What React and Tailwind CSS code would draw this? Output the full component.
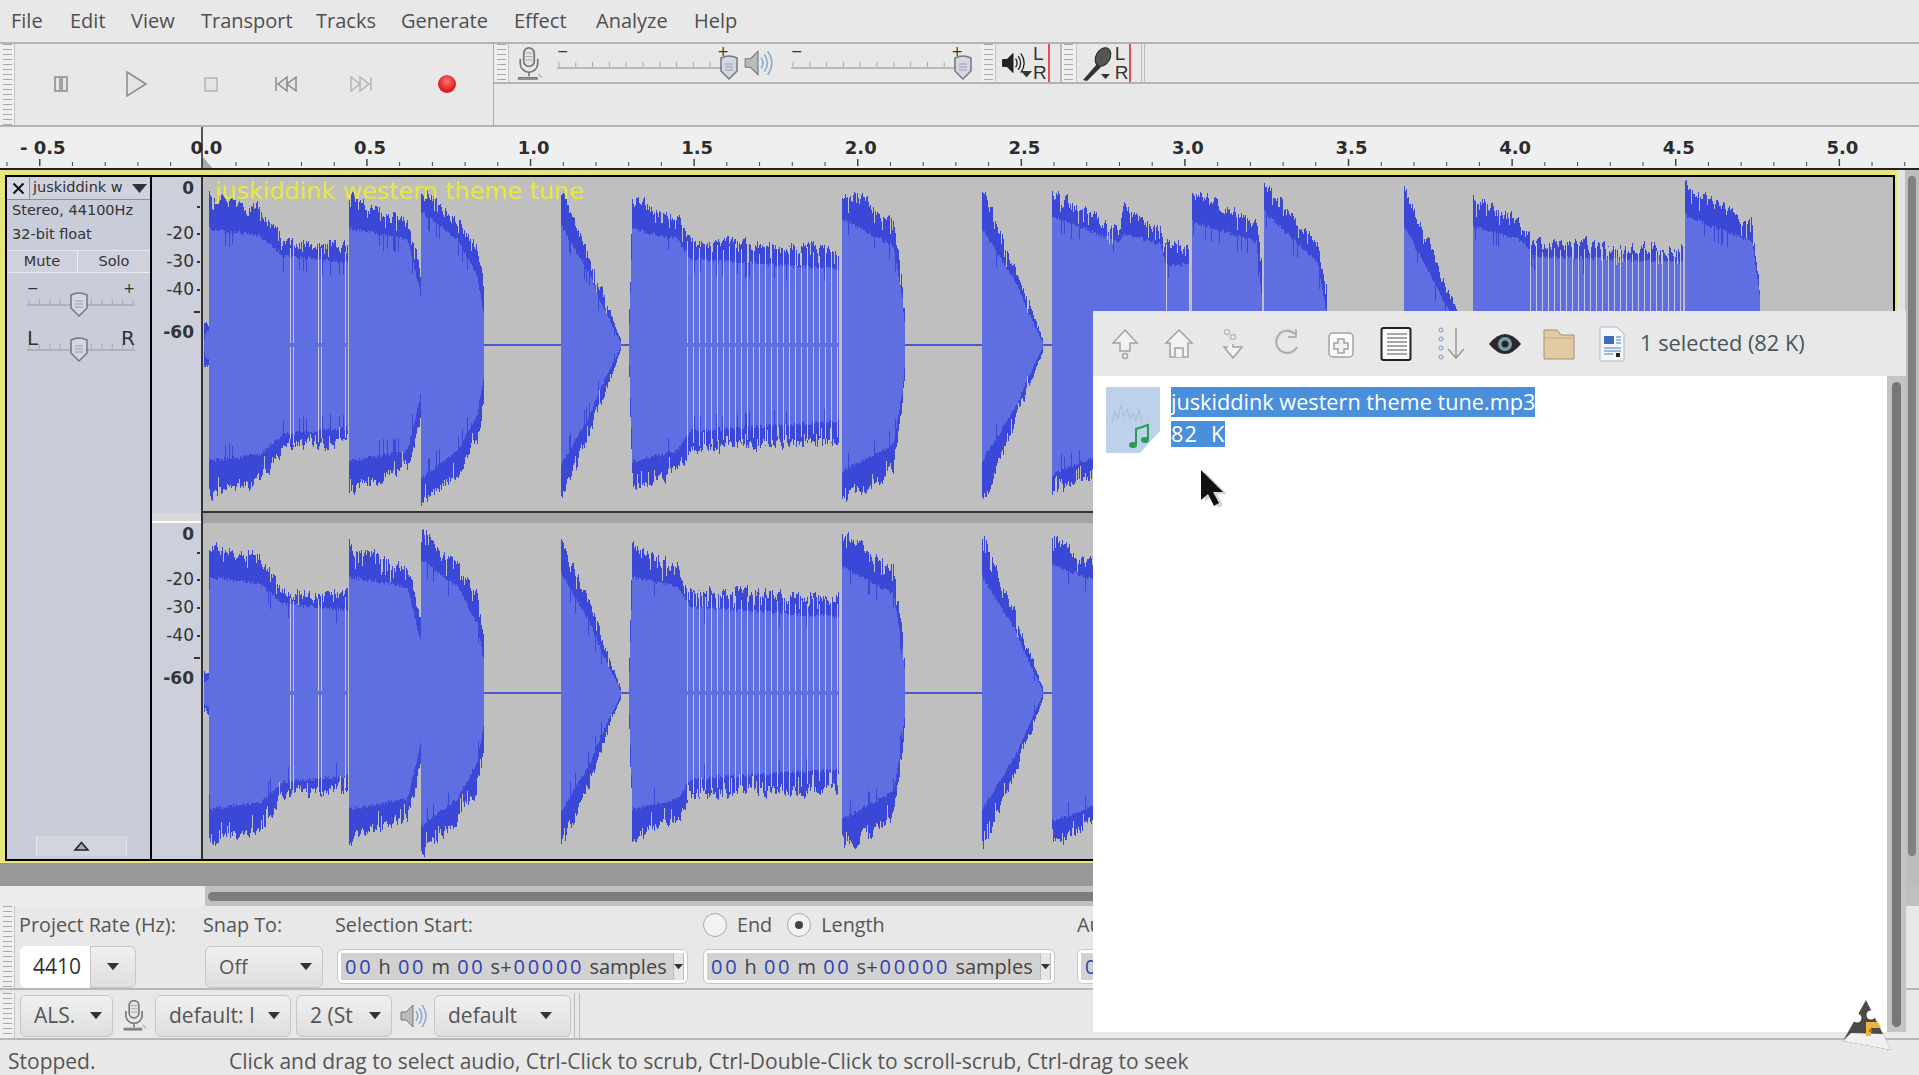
import { useMemo } from 'react';

const MENU = [
  ['File', 'w-[59px]'],
  ['Edit', 'w-[61px]'],
  ['View', 'w-[70px]'],
  ['Transport', 'w-[115px]'],
  ['Tracks', 'w-[85px]'],
  ['Generate', 'w-[113px]'],
  ['Effect', 'w-[82px]'],
  ['Analyze', 'w-[98px]'],
  ['Help', 'w-[60px]'],
];

const RULER = ['- 0.5', '0.0', '0.5', '1.0', '1.5', '2.0', '2.5', '3.0', '3.5', '4.0', '4.5', '5.0'];

// x, peak amplitude, rms amplitude (px from the centre line)
const BLOCKS = [
  { keys: [[204, 20, 14], [208, 24, 18], [209, 155, 125], [260, 142, 118], [283, 107, 98], [347, 103, 92]], gaps: [290, 293, 318, 321, 345] },
  { keys: [[349, 153, 125], [407, 128, 115], [419, 85, 65], [420, 80, 60]] },
  { keys: [[421, 165, 142], [457, 132, 115], [477, 102, 78], [483, 65, 42]] },
  { keys: [[561, 160, 128], [590, 92, 78], [620, 8, 4]] },
  { keys: [[629, 40, 28], [632, 152, 125], [677, 132, 115], [690, 108, 95], [838, 102, 85]], comb: [687, 838] },
  { keys: [[842, 162, 135], [893, 132, 108], [902, 68, 55], [904, 42, 30]] },
  { keys: [[982, 165, 125], [1017, 78, 68], [1042, 8, 4]] },
  { keys: [[1052, 158, 138], [1118, 120, 112], [1124, 145, 120], [1160, 118, 110], [1166, 105, 88], [1189, 103, 90]], gaps: [1166, 1189] },
  { keys: [[1192, 160, 132], [1256, 128, 112], [1261, 92, 60]] },
  { keys: [[1264, 167, 142], [1317, 105, 92], [1326, 65, 42]] },
  { keys: [[1404, 163, 128], [1455, 42, 30], [1470, 8, 4]] },
  { keys: [[1473, 155, 128], [1522, 125, 113], [1533, 107, 98], [1682, 103, 92]], comb: [1530, 1682] },
  { keys: [[1685, 165, 138], [1752, 125, 112], [1759, 68, 60]] },
];

const FLATS = [[483, 561], [620, 629], [904, 982], [1042, 1052], [1326, 1404], [1470, 1473]];

function rng(seed) {
  let s = seed;
  return () => {
    s = (s * 16807) % 2147483647;
    return s / 2147483647;
  };
}

function interp(keys, x) {
  for (let i = 0; i < keys.length - 1; i++) {
    const [x0, p0, r0] = keys[i];
    const [x1, p1, r1] = keys[i + 1];
    if (x >= x0 && x <= x1) {
      const t = (x - x0) / (x1 - x0 || 1);
      return [p0 + (p1 - p0) * t, r0 + (r1 - r0) * t];
    }
  }
  return [0, 0];
}

function buildWave(seed, center, offset) {
  const r = rng(seed);
  let dark = '';
  let light = '';
  let gap = '';
  let walkA = 0;
  let walkB = 0;
  BLOCKS.forEach((b) => {
    const start = b.keys[0][0];
    const end = b.keys[b.keys.length - 1][0];
    for (let x = start; x <= end; x++) {
      const [p, q] = interp(b.keys, x);
      const px = x - offset + 0.5;
      walkA = walkA * 0.55 + r() * 11;
      walkB = walkB * 0.55 + r() * 11;
      const scale = Math.min(1, p / 60);
      const top = p + 6 * scale - walkA * scale - (r() < 0.1 ? 12 * scale : 0);
      const bot = p + 6 * scale - walkB * scale - (r() < 0.1 ? 12 * scale : 0);
      const dip = r() < 0.06 ? 14 * scale : 0;
      const rt = Math.min(q - (7 + r() * 4) * scale - dip, top);
      const rb = Math.min(q - (7 + r() * 4) * scale - dip, bot);
      dark += `M${px} ${(center - top).toFixed(0)}V${(center + bot).toFixed(0)}`;
      light += `M${px} ${(center - rt).toFixed(0)}V${(center + rb).toFixed(0)}`;
      const inComb = b.comb && x >= b.comb[0] && x <= b.comb[1] && (x - b.comb[0]) % 6 === 0;
      if (inComb || (b.gaps && b.gaps.includes(x))) {
        const g = p - 8 - r() * 8;
        gap += `M${px} ${(center - g - r() * 6).toFixed(0)}V${center - 2}M${px} ${center + 2}V${(center + g + r() * 6).toFixed(0)}`;
      }
    }
  });
  const flat = FLATS.map(([a, b]) => `M${a - offset} ${center}H${b - offset}`).join('');
  return { dark, light, gap, flat };
}

function Wave({ seed, center, height }) {
  const w = useMemo(() => buildWave(seed, center, 203), [seed, center]);
  return (
    <svg width="1690" height={height} className="block" shapeRendering="crispEdges">
      <path d={w.flat} stroke="#4c58c8" strokeWidth="2" fill="none" />
      <path d={w.dark} stroke="#3b47d6" strokeWidth="1" fill="none" />
      <path d={w.light} stroke="#5f6ee0" strokeWidth="1" fill="none" />
      <path d={w.gap} stroke="#c6c8d8" strokeWidth="1.2" fill="none" />
    </svg>
  );
}

function Grip({ className = '' }) {
  return (
    <div className={`w-[15px] shrink-0 border-r border-[#c4c4c4] bg-[#efefef] bg-[repeating-linear-gradient(to_bottom,#a8a8a8_0,#a8a8a8_1px,transparent_1px,transparent_5px)] bg-[length:9px_100%] bg-center bg-no-repeat ${className}`} />
  );
}

function Caret({ size = 12 }) {
  return (
    <svg width={size} height={size * 0.6} viewBox="0 0 10 6" className="shrink-0">
      <path d="M0 0h10L5 6z" fill="#333" />
    </svg>
  );
}

function Combo({ width, children, pad = 'pl-[13px] pr-[10px]' }) {
  return (
    <div className={`${width} ${pad} h-[42px] shrink-0 flex items-center justify-between rounded-md border border-[#c6c6c6] bg-gradient-to-b from-[#f0f0f0] to-[#dedede] text-[#555]`}>
      <span className="whitespace-nowrap overflow-hidden">{children}</span>
      <Caret />
    </div>
  );
}

function Tc({ children }) {
  return <span className="ml-[2px] text-[#2f3fb4] tracking-[2.7px]">{children}</span>;
}

function TimeField({ width }) {
  return (
    <div className={`${width} h-[35px] mt-[3px] shrink-0 rounded-md border border-[#c8c8c8] bg-white p-[3px] flex`}>
      <div className="flex-1 flex items-center justify-between bg-[#d2d2d2] pl-[2px] text-[20px] text-[#444] whitespace-nowrap overflow-hidden">
        <span>
          <Tc>00</Tc> h <Tc>00</Tc> m <Tc>00</Tc> s+<Tc>00000</Tc> samples
        </span>
        <div className="w-[11px] self-stretch shrink-0 flex items-center justify-center bg-[#e6e6e6] border-x border-[#bbb]">
          <Caret size={9} />
        </div>
      </div>
    </div>
  );
}

function Radio({ on }) {
  return (
    <div className="w-[24px] h-[24px] rounded-full border border-[#a8a8a8] bg-[#f2f2f2] flex items-center justify-center">
      {on && <div className="w-[8px] h-[8px] rounded-full bg-[#444]" />}
    </div>
  );
}

function Mic({ size = 30 }) {
  return (
    <svg width={size} height={size * 1.25} viewBox="0 0 24 30" fill="none" stroke="#777">
      <rect x="7.5" y="1.5" width="9" height="16" rx="4.5" fill="#e4e4e4" strokeWidth="1.5" />
      <path d="M9 6h6M9 9h6M9 12h6" stroke="#aaa" />
      <path d="M4.5 11v4a7.5 7.5 0 0 0 15 0v-4M12 22.5V26" strokeWidth="1.5" />
      <path d="M3 27h16v1.5H3z" fill="#999" />
      <path d="M20 24l3 3" stroke="#aaa" />
    </svg>
  );
}

function Speaker({ size = 34, dark }) {
  return (
    <svg width={size} height={size} viewBox="0 0 30 30" fill="none">
      <path d="M3 11h5l7-7v22l-7-7H3z" fill={dark ? '#222' : '#bbb'} stroke={dark ? '#111' : '#777'} />
      <path
        d="M18 10c2 3 2 7 0 10M21 7c3.500 5 3.500 11 0 16M24 4c5 7 5 15 0 22"
        stroke={dark ? '#222' : '#8fa6d6'}
        strokeWidth="1.5"
      />
    </svg>
  );
}

function SliderTrack({ width, thumb, minus = '−', plus = '+', big }) {
  const ticks = Array.from({ length: 11 }, (_, i) => 2 + (i * (width - 4)) / 10);
  return (
    <div className="relative" style={{ width, height: 34 }}>
      <svg width={width} height="34" className="block overflow-visible">
        {ticks.map((x) => (
          <path key={x} d={`M${x} 16v5`} stroke="#aaa" />
        ))}
        <path d={`M0 22H${width}`} stroke="#aaa" strokeWidth="1.5" />
        <path
          d={`M${thumb - 8} 12q8-4 16 0v13l-8 8-8-8z`}
          fill="#d4d6e4"
          stroke="#777"
          strokeWidth="1.5"
        />
        <path d={`M${thumb - 4} 18h8M${thumb - 4} 21h8M${thumb - 4} 24h8`} stroke="#9a9cb0" />
      </svg>
      <span className={`absolute left-0 top-[-5px] text-[#333] ${big ? 'text-[20px]' : 'text-[14px]'} font-['DejaVu_Sans',sans-serif]`}>{minus}</span>
      <span className={`absolute right-0 top-[-5px] text-[#333] ${big ? 'text-[20px]' : 'text-[14px]'} font-['DejaVu_Sans',sans-serif]`}>{plus}</span>
    </div>
  );
}

function MeterLetters() {
  return (
    <div className="flex flex-col text-[19px] leading-[19px] text-[#333] font-['Liberation_Sans',sans-serif]">
      <span className="h-[19px] border-r-2 border-[#e05050] pr-[1px]">L</span>
      <span className="h-[19px] border-r-2 border-[#e05050] pr-[1px]">R</span>
    </div>
  );
}

function TransportIcon({ children }) {
  return (
    <div className="w-[75px] h-full flex items-center justify-center shrink-0 pb-[2px]">
      <svg width="28" height="28" viewBox="0 0 28 28" fill="#e4e4e4" stroke="#8a8a8a" strokeWidth="1.5">
        {children}
      </svg>
    </div>
  );
}

function DbScale({ className = '' }) {
  const Row = ({ label, bold }) => (
    <div className={`h-[28px] flex items-center justify-end gap-[3px] ${bold ? 'font-bold' : ''}`}>
      <span>{label}</span>
      <span className="w-[3px] h-[2px] bg-[#333]" />
    </div>
  );
  return (
    <div className={`w-[49px] flex flex-col pr-[1px] text-[17px] text-[#333] font-['DejaVu_Sans',sans-serif] ${className}`}>
      <div className="h-[24px] flex items-center justify-end pr-[6px] font-bold">0</div>
      <div className="h-[19px] flex items-start justify-end pt-[5px]">
        <span className="w-[3px] h-[2px] bg-[#333]" />
      </div>
      <Row label="-20" />
      <Row label="-30" />
      <Row label="-40" />
      <div className="h-[15px] flex items-center justify-end">
        <span className="w-[6px] h-[2px] bg-[#333]" />
      </div>
      <div className="h-[28px] flex items-center justify-end pr-[6px] font-bold">-60</div>
    </div>
  );
}

function FileTool({ children, w = 30 }) {
  return (
    <svg width={w} height="34" viewBox="0 0 30 34" fill="#f2f2f2" stroke="#a2a2a2" strokeWidth="1.5" className="shrink-0">
      {children}
    </svg>
  );
}

function Tux() {
  return (
    <svg width="50" height="52" viewBox="0 0 50 52" className="absolute left-[1842px] top-[1000px]">
      <path d="M24 0L49 50 1 41z" fill="#4c4a48" />
      <path d="M9 33l32 1 8 16-48-9z" fill="#f0f0f0" />
      <circle cx="15" cy="18" r="4.500" fill="#fff" />
      <circle cx="29" cy="15" r="4.500" fill="#fff" />
      <path d="M24 22h12l3 6H29v8h-5z" fill="#eab53c" />
      <rect x="27" y="29" width="3" height="3" fill="#d8583c" />
    </svg>
  );
}

function FileDialog() {
  return (
    <div className="absolute left-[1093px] top-[311px] w-[813px] h-[721px] bg-white flex flex-col font-['Open_Sans',sans-serif]">
      <div className="h-[65px] bg-[#e8e8e8] flex items-center pl-[17px] gap-[24px]">
        <FileTool>
          <path d="M15 3L27 16H20V24H10V16H3z" />
          <circle cx="15" cy="29" r="2.500" />
        </FileTool>
        <FileTool>
          <path d="M15 3L28 16H24V30H6V16H2z" />
          <path d="M11 30V21h8v9" />
        </FileTool>
        <FileTool>
          <circle cx="9" cy="5" r="2.500" stroke="#bbb" />
          <circle cx="15" cy="10" r="2.500" stroke="#bbb" />
          <path d="M15 17v3h9l-9 11-9-11h4" />
        </FileTool>
        <FileTool>
          <path d="M25 20a11 11 0 1 1-2-13" fill="none" strokeWidth="4" stroke="#ddd" />
          <path d="M25 20a11 11 0 1 1-2-13" fill="none" />
          <path d="M24 2v8h-8" fill="none" />
        </FileTool>
        <FileTool>
          <rect x="3" y="6" width="24" height="24" rx="4" fill="#fafafa" />
          <path d="M12 12h6v4h4v6h-4v4h-6v-4H8v-6h4z" />
        </FileTool>
        <svg width="32" height="36" viewBox="0 0 32 36" className="shrink-0">
          <rect x="1.500" y="2" width="29" height="32" rx="2" fill="#fafafa" stroke="#222" strokeWidth="2" />
          <path d="M7 8h20M7 12h20M7 16h20M7 20h20M7 24h20M7 28h20" stroke="#555" />
        </svg>
        <svg width="30" height="36" viewBox="0 0 30 36" fill="none" className="shrink-0 mr-[-2px]">
          <circle cx="5" cy="4" r="2" stroke="#7795c8" />
          <circle cx="5" cy="13" r="2" stroke="#7795c8" />
          <circle cx="5" cy="22" r="2" stroke="#7795c8" />
          <circle cx="5" cy="31" r="2" stroke="#7795c8" />
          <path d="M20 2v30M12 23l8 9 8-9" stroke="#999" strokeWidth="1.500" />
        </svg>
        <svg width="34" height="26" viewBox="0 0 34 26" className="shrink-0 mr-[-3px]">
          <path d="M1 13Q17-7 33 13 17 33 1 13z" fill="#2a2a2a" />
          <circle cx="17" cy="13" r="7" fill="#7c9aa8" />
          <circle cx="17" cy="13" r="3.500" fill="#1c2a30" />
        </svg>
        <svg width="32" height="34" viewBox="0 0 32 34" className="shrink-0 mr-[-1px]">
          <path d="M1 3h13l4 5h13v24H1z" fill="#e2cba4" stroke="#a68f6c" />
          <path d="M1 11h30" stroke="#c4ab84" />
        </svg>
        <svg width="28" height="36" viewBox="0 0 28 36" className="shrink-0 mr-[-10px]">
          <path d="M2 1h17l7 7v27H2z" fill="#f5f7fa" stroke="#b0b6c0" />
          <rect x="6" y="10" width="10" height="8" fill="#3f6fb0" />
          <path d="M18 11h5M18 14h5M18 17h5M6 22h17M6 25h17M6 28h9" stroke="#4a78b8" />
          <rect x="18" y="27" width="4" height="4" fill="#222" />
        </svg>
        <span className="text-[21.800px] text-[#47565c] whitespace-nowrap">1 selected (82 K)</span>
      </div>
      <div className="relative flex-1 flex">
        <div className="flex-1 flex items-start pl-[13px] pt-[11px] gap-[11px]">
          <svg width="54" height="66" viewBox="0 0 54 66" className="shrink-0">
            <path d="M0 0h54v44L34 66H0z" fill="#bdd2ea" />
            <path d="M6 36l3-12 3 8 3-14 3 12 3-8 3 10 3-6 3 8 3-12 3 14" stroke="#a8bcd4" fill="none" />
            <path d="M30 58V42l12-4v14" stroke="#2d9a58" strokeWidth="2" fill="none" />
            <ellipse cx="27" cy="58" rx="4" ry="3" fill="#2d9a58" />
            <ellipse cx="39" cy="53" rx="4" ry="3" fill="#2d9a58" />
          </svg>
          <div className="flex flex-col items-start gap-[4px] text-[21.700px] text-white whitespace-nowrap">
            <span className="h-[30px] leading-[30px] bg-[#4a8fdb]">juskiddink western theme tune.mp3</span>
            <span className="h-[26px] leading-[26px] bg-[#4a8fdb] tracking-[1px]">82&nbsp; K</span>
          </div>
        </div>
        <div className="w-[19px] bg-[#c4c4c4] flex justify-center pt-[6px] pb-[5px]">
          <div className="w-[9px] h-full rounded-full bg-[#777]" />
        </div>
        {/* mouse pointer */}
        <svg width="28" height="40" viewBox="0 0 28 40" className="absolute left-[107px] top-[93px]">
          <path d="M3 2v30l7-6 6 12 5-3-6-11h10z" fill="#aaa" opacity=".5" transform="translate(2 1)" />
          <path d="M1 1v30l7-6 6 12 5-3-6-11h10z" fill="#111" />
        </svg>
      </div>
    </div>
  );
}

export default function App() {
  return (
    <div className="relative w-[1919px] h-[1075px] overflow-hidden bg-[#e8e8e8] flex flex-col font-['Open_Sans',sans-serif] text-[#555]">
      {/* Menu bar */}
      <div className="h-[42px] shrink-0 flex items-center pl-[11px] text-[20px] text-[#4f4f4f]">
        {MENU.map(([label, w]) => (
          <span key={label} className={w}>{label}</span>
        ))}
      </div>

      {/* Toolbars */}
      <div className="h-[85px] shrink-0 flex border-y-2 border-[#b4b4b4]">
        <Grip className="w-[15px]" />
        <div className="w-[479px] shrink-0 flex items-center border-r border-[#aaa] pl-[8px]">
          <TransportIcon>
            <rect x="8" y="7" width="5" height="14" />
            <rect x="15" y="7" width="5" height="14" />
          </TransportIcon>
          <TransportIcon>
            <path d="M5 2l19 12L5 26z" />
          </TransportIcon>
          <TransportIcon>
            <rect x="8" y="8" width="12" height="13" stroke="#b4b4b4" />
          </TransportIcon>
          <TransportIcon>
            <path d="M4 7v14M24 7v14L15 14zM15 7v14L6 14z" />
          </TransportIcon>
          <TransportIcon>
            <path d="M24 7v14M4 7v14l9-7zM13 7v14l9-7z" stroke="#b4b4b4" />
          </TransportIcon>
          <div className="w-[97px] flex items-center justify-center pb-[2px] pl-[2px]">
            <div className="w-[18px] h-[18px] rounded-full bg-[radial-gradient(circle_at_50%_35%,#f77,#e02020_60%,#c01010)]" />
          </div>
        </div>
        <div className="flex-1 flex flex-col">
          <div className="h-[40px] flex items-center border-b-2 border-[#b4b4b4] bg-[#e8e8e8]">
            <Grip className="h-full" />
            <div className="ml-[6px] w-[37px]">
              <Mic size={28} />
            </div>
            <div className="mx-[5px]">
              <SliderTrack width={172} thumb={172} />
            </div>
            <div className="ml-[8px] mr-[17px]">
              <Speaker size={32} />
            </div>
            <SliderTrack width={172} thumb={172} />
            <div className="w-[18px]" />
            <Grip className="h-full" />
            <div className="ml-[4px] mr-[4px] relative">
              <Speaker size={26} dark />
              <div className="absolute right-[-6px] bottom-[-2px]">
                <Caret size={11} />
              </div>
            </div>
            <div className="ml-[3px]">
              <MeterLetters />
            </div>
            <div className="w-[12px] h-full border-r-2 border-[#bbb]" />
            <Grip className="h-full" />
            <svg width="36" height="40" viewBox="0 0 36 40" className="ml-[2px]">
              <path d="M4 37l14-16 4 3L8 38z" fill="#333" />
              <ellipse cx="24" cy="14" rx="7" ry="10" transform="rotate(30 24 14)" fill="#555" stroke="#222" />
              <path d="M22 31h9l-4.500 5z" fill="#333" />
            </svg>
            <MeterLetters />
            <div className="w-[14px] h-full border-r-4 border-double border-[#bbb]" />
          </div>
        </div>
      </div>

      {/* Time ruler */}
      <div className="h-[43px] shrink-0 bg-[#efefef] relative border-b-2 border-[#222] overflow-hidden">
        <div className="flex ml-[-39px] h-[26px] items-center mt-[7px] text-[18px] font-bold text-[#2c2c2c] font-['DejaVu_Sans',sans-serif]">
          {RULER.map((t) => (
            <span key={t} className="w-[163.6px] shrink-0 text-center">{t}</span>
          ))}
        </div>
        <svg width="1919" height="43" className="absolute inset-0">
          {Array.from({ length: 60 }, (_, i) => {
            const x = 7 + i * 32.72;
            const major = i % 5 === 1;
            return <path key={i} d={`M${x} ${major ? 32 : 35}V39`} stroke="#444" strokeWidth={major ? 1.5 : 1} />;
          })}
          <path d="M202 0V43" stroke="#222" strokeWidth="1.5" />
          <path d="M203 30l11 13h-11z" fill="#aaa" />
        </svg>
      </div>

      {/* Track panel */}
      <div className="h-[716px] shrink-0 flex bg-[#a2a2a2]">
        <div className="w-[1897px] shrink-0 flex flex-col bg-gradient-to-b from-[#a8a8a8] to-[#989898]">
          <div className="h-[693px] shrink-0 bg-[#e6e67c] pt-[5px] pb-[2px] pl-[5px] pr-[2px]">
            <div className="h-full flex border-2 border-black">
              {/* Track controls */}
              <div className="w-[145px] shrink-0 flex flex-col bg-[#c9ccd9] border-r-2 border-black font-['DejaVu_Sans',sans-serif] text-[#333]">
                <div className="h-[23px] flex border-b border-[#8d8fa0]">
                  <div className="w-[23px] flex items-center justify-center border-r border-[#8d8fa0] bg-[#d6d8e2]">
                    <svg width="13" height="13" viewBox="0 0 13 13">
                      <path d="M1.500 1.500l10 10M11.500 1.500l-10 10" stroke="#111" strokeWidth="2" />
                    </svg>
                  </div>
                  <div className="flex-1 flex items-center justify-between pl-[3px] pr-[3px] text-[14.500px] whitespace-nowrap overflow-hidden bg-[#d0d2de]">
                    <span>juskiddink w</span>
                    <Caret size={15} />
                  </div>
                </div>
                <div className="h-[24px] pl-[5px] mt-[-1px] flex items-center text-[14.500px]">Stereo, 44100Hz</div>
                <div className="h-[24px] pl-[5px] flex items-center text-[14.500px]">32-bit float</div>
                <div className="h-[23px] flex text-[14.500px] border-y border-[#e8e8f0] mt-[3px]">
                  <div className="w-[71px] flex items-center justify-center border-r border-[#f0f0f5] bg-[#cfd1dc] font-medium">Mute</div>
                  <div className="flex-1 flex items-center justify-center bg-[#cfd1dc]">Solo</div>
                </div>
                <div className="mt-[10px] ml-[20px]">
                  <SliderTrack width={108} thumb={52} />
                </div>
                <div className="mt-[11px] ml-[20px]">
                  <SliderTrack width={108} thumb={52} minus="L" plus="R" big />
                </div>
                <div className="mt-auto mb-[3px] ml-[29px] w-[91px] h-[20px] flex items-center justify-center bg-[#d2d4de] border-x border-[#e6e6ee]">
                  <svg width="17" height="10" viewBox="0 0 17 10">
                    <path d="M8.500 1.500L15 9H2z" fill="#aaa" stroke="#222" strokeWidth="1.500" />
                  </svg>
                </div>
              </div>

              {/* dB scale */}
              <div className="w-[51px] shrink-0 flex flex-col bg-[#cdd0db] border-r-2 border-[#333]">
                <DbScale className="h-[336px]" />
                <div className="h-[10px] bg-[#d8d8d8] border-b-2 border-white" />
                <DbScale />
              </div>

              {/* Waveforms */}
              <div className="relative flex-1 flex flex-col bg-[#bfbfbf] overflow-hidden">
                <div className="h-[336px] shrink-0 border-b-2 border-[#333]">
                  <Wave seed={77} center={168} height={334} />
                </div>
                <div className="h-[10px] shrink-0 bg-[#a4a4a4]" />
                <div className="flex-1">
                  <Wave seed={4021} center={170} height={340} />
                </div>
                <span className="absolute left-[12px] top-[1px] leading-[26px] text-[23.800px] text-[#e8e83c] whitespace-nowrap font-['DejaVu_Sans',sans-serif]">
                  juskiddink western theme tune
                </span>
              </div>
            </div>
          </div>
        </div>
        <div className="flex-1 bg-[#e4e4e4] flex justify-end">
          <div className="w-[14px] bg-[#bdbdbd] flex justify-center pt-[6px]">
            <div className="w-[8px] h-[680px] rounded-full bg-[#808080]" />
          </div>
        </div>
      </div>

      {/* Horizontal scrollbar */}
      <div className="h-[20px] shrink-0 flex bg-[#ececec]">
        <div className="w-[205px] shrink-0" />
        <div className="flex-1 bg-[#c0c0c0] flex items-center pl-[3px]">
          <div className="w-[1600px] h-[9px] rounded-full bg-[#7c7c7c]" />
        </div>
      </div>

      {/* Selection toolbar */}
      <div className="h-[84px] shrink-0 flex border-b-2 border-[#b8b8b8] text-[19.800px]">
        <Grip />
        <div className="w-[188px] shrink-0 flex flex-col pl-[4px]">
          <div className="h-[40px] pb-[3px] flex items-center whitespace-nowrap">Project Rate (Hz):</div>
          <div className="flex ml-[1px]">
            <div className="w-[70px] h-[42px] pl-[13px] flex items-center rounded-l-md bg-white text-[#333] text-[21px]">4410</div>
            <div className="w-[46px] h-[42px] flex items-center justify-center rounded-r-md border border-[#c6c6c6] bg-gradient-to-b from-[#f0f0f0] to-[#dedede]">
              <Caret />
            </div>
          </div>
        </div>
        <div className="w-[132px] shrink-0 flex flex-col">
          <div className="h-[40px] pb-[3px] flex items-center whitespace-nowrap">Snap To:</div>
          <div className="ml-[2px]">
            <Combo width="w-[118px]">Off</Combo>
          </div>
        </div>
        <div className="w-[368px] shrink-0 flex flex-col">
          <div className="h-[40px] pb-[3px] flex items-center whitespace-nowrap">Selection Start:</div>
          <div className="ml-[2px]">
            <TimeField width="w-[351px]" />
          </div>
        </div>
        <div className="w-[374px] shrink-0 flex flex-col">
          <div className="h-[40px] pb-[3px] flex items-center whitespace-nowrap">
            <div className="mr-[10px]"><Radio /></div>
            <span className="mr-[15px]">End</span>
            <div className="mr-[10px]"><Radio on /></div>
            <span>Length</span>
          </div>
          <TimeField width="w-[352px]" />
        </div>
        <div className="flex-1 flex flex-col">
          <div className="h-[40px] pb-[3px] flex items-center whitespace-nowrap">Audio Position:</div>
          <TimeField width="w-[352px]" />
        </div>
      </div>

      {/* Device toolbar */}
      <div className="h-[50px] shrink-0 flex items-center pt-[3px] border-b-2 border-[#b8b8b8] text-[21px]">
        <Grip className="h-full" />
        <div className="ml-[5px]">
          <Combo width="w-[93px]">ALS.</Combo>
        </div>
        <div className="w-[42px] flex justify-center">
          <Mic size={26} />
        </div>
        <Combo width="w-[136px]">default: I</Combo>
        <div className="ml-[5px]">
          <Combo width="w-[96px]">2 (St</Combo>
        </div>
        <div className="w-[42px] flex justify-center">
          <Speaker size={30} />
        </div>
        <Combo width="w-[137px]" pad="pl-[13px] pr-[18px]">default</Combo>
        <div className="ml-[3px] w-[6px] h-full border-x border-[#bbb]" />
      </div>

      {/* Status bar */}
      <div className="flex-1 flex items-center pt-[6px] leading-[24px] text-[21px] whitespace-nowrap text-[#555]">
        <span className="w-[229px] pl-[8px] shrink-0">Stopped.</span>
        <span>Click and drag to select audio, Ctrl-Click to scrub, Ctrl-Double-Click to scroll-scrub, Ctrl-drag to seek</span>
      </div>

      <FileDialog />
      <Tux />
    </div>
  );
}
